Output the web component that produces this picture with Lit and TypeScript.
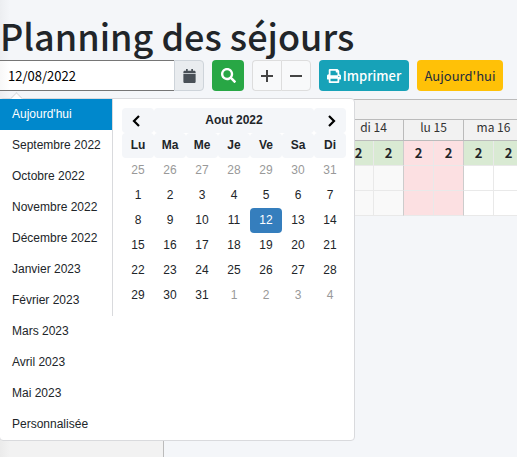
import { LitElement, html, css } from "lit";
import { customElement, state } from "lit/decorators.js";
import { classMap } from "lit/directives/class-map.js";

const RANGES = [
  "Aujourd'hui",
  "Septembre 2022",
  "Octobre 2022",
  "Novembre 2022",
  "Décembre 2022",
  "Janvier 2023",
  "Février 2023",
  "Mars 2023",
  "Avril 2023",
  "Mai 2023",
  "Personnalisée",
];

const WEEKDAYS = ["Lu", "Ma", "Me", "Je", "Ve", "Sa", "Di"];

@customElement("date-popover")
class DatePopover extends LitElement {
  @state() private range = 0;
  @state() private selected = 18;

  static styles = css`
    :host {
      display: flex;
      align-items: flex-start;
      box-sizing: border-box;
      width: 356px;
      background: #fff;
      border: 1px solid #d9dadd;
      border-radius: 4px;
      font: 12px/25px "Liberation Sans", Arial, sans-serif;
      color: #212529;
    }
    :host::before {
      content: "";
      position: absolute;
      top: -5px;
      left: 12px;
      width: 8px;
      height: 8px;
      background: #fff;
      border: solid #d9dadd;
      border-width: 1px 0 0 1px;
      transform: rotate(45deg);
    }
    button {
      font: inherit;
      color: inherit;
      border: 0;
      background: none;
      padding: 0;
      margin: 0;
      cursor: pointer;
    }
    .ranges {
      position: relative;
      list-style: none;
      margin: 0;
      padding: 0;
      width: 112px;
    }
    .range {
      display: block;
      width: 100%;
      height: 31px;
      padding: 0 12px;
      text-align: left;
      white-space: nowrap;
    }
    .range.active {
      background: #08c;
      color: #fff;
    }
    .calendar {
      flex: 1;
      border-left: 1px solid #d9dadd;
      padding: 9px 8px 8px 9px;
    }
    table {
      width: 100%;
      table-layout: fixed;
      border-collapse: separate;
      border-spacing: 0;
    }
    th,
    td {
      height: 25px;
      padding: 0;
      text-align: center;
    }
    th {
      background: #f4f6f9;
      border-radius: 4px;
    }
    th button,
    td button {
      display: block;
      width: 100%;
      height: 25px;
      border-radius: 4px;
    }
    .chevron {
      display: block;
      width: 12px;
      height: 12px;
      margin: 0 auto;
    }
    .off {
      color: #999;
    }
    .chosen {
      background: #357ebd;
      color: #fff;
    }
  `;

  private day(i: number) {
    const n = i < 7 ? 25 + i : i < 38 ? i - 6 : i - 37;
    const off = i < 7 || i > 37;
    return html`<td>
      <button
        class=${classMap({ off, chosen: i === this.selected })}
        @click=${() => (this.selected = i)}
      >${n}</button>
    </td>`;
  }

  render() {
    return html`
      <ul class="ranges">
        ${RANGES.map(
          (r, i) => html`<li>
            <button
              class=${classMap({ range: true, active: i === this.range })}
              @click=${() => (this.range = i)}
            >${r}</button>
          </li>`
        )}
      </ul>
      <div class="calendar">
        <table>
          <thead>
            <tr>
              <th>
                <button aria-label="Mois précédent">
                  <svg class="chevron" viewBox="0 0 12 12" fill="none" stroke="#000" stroke-width="2.200"><path d="M7 1 2 6l5 5" /></svg>
                </button>
              </th>
              <th colspan="5">Aout 2022</th>
              <th>
                <button aria-label="Mois suivant">
                  <svg class="chevron" viewBox="0 0 12 12" fill="none" stroke="#000" stroke-width="2.200"><path d="m5 1 5 5-5 5" /></svg>
                </button>
              </th>
            </tr>
            <tr>${WEEKDAYS.map((d) => html`<th>${d}</th>`)}</tr>
          </thead>
          <tbody>
            ${[0, 1, 2, 3, 4, 5].map(
              (w) => html`<tr>${WEEKDAYS.map((_, d) => this.day(w * 7 + d))}</tr>`
            )}
          </tbody>
        </table>
      </div>
    `;
  }
}

interface Day {
  label: string;
  kind: "work" | "weekend" | "holiday";
  free: string[];
}

const DAYS: Day[] = [
  { label: "", kind: "work", free: ["", ""] },
  { label: "", kind: "work", free: ["", ""] },
  { label: "", kind: "weekend", free: ["", ""] },
  { label: "di 14", kind: "weekend", free: ["2", "2"] },
  { label: "lu 15", kind: "holiday", free: ["2", "2"] },
  { label: "ma 16", kind: "work", free: ["2", "2"] },
];

@customElement("stay-planner")
class StayPlanner extends LitElement {
  static styles = css`
    :host {
      display: flex;
      overflow: hidden;
      font: 12px/20px "Noto Sans CJK SC", "Noto Sans", sans-serif;
      color: #333;
    }
    .rooms {
      flex: none;
      box-sizing: border-box;
      width: 164px;
      background: linear-gradient(90deg, #ebebeb, #f2f2f2 10px);
      border-top: 1px solid #bbb;
      border-right: 1px solid #bbb;
    }
    .days {
      flex: 1;
      min-width: 0;
      overflow: hidden;
    }
    table {
      width: 360px;
      table-layout: fixed;
      border-collapse: separate;
      border-spacing: 0;
    }
    th,
    td {
      box-sizing: border-box;
      padding: 0;
      text-align: center;
    }
    th {
      background: #f2f2f2;
      font-weight: 400;
      border: solid #bbb;
      border-width: 0 1px 1px 0;
    }
    .month {
      height: 21px;
      border-top-width: 1px;
    }
    .day {
      height: 21px;
      line-height: 14px;
      padding-bottom: 6px;
    }
    td {
      height: 25px;
      background: #fff;
      border: solid #e9e9e9;
      border-width: 0 1px 1px 0;
    }
    .pm {
      border-right-color: #ccc;
    }
    .weekend {
      background: #f9f9f9;
    }
    .count {
      background: #d9ead3;
      font-weight: 700;
      font-size: 13px;
      line-height: 24px;
      color: #212529;
    }
    .holiday {
      background: #fce0e2;
    }
  `;

  private cells(count: boolean) {
    return DAYS.map((d) =>
      ["am", "pm"].map(
        (half, i) => html`<td
          class=${classMap({
            [half]: true,
            weekend: d.kind === "weekend",
            count,
            holiday: d.kind === "holiday",
          })}
        >${count ? d.free[i] : ""}</td>`
      )
    );
  }

  render() {
    return html`
      <div class="rooms"></div>
      <div class="days">
        <table>
          <thead>
            <tr><th class="month" colspan="12"></th></tr>
            <tr>${DAYS.map((d) => html`<th class="day" colspan="2">${d.label}</th>`)}</tr>
          </thead>
          <tbody>
            <tr>${this.cells(true)}</tr>
            <tr>${this.cells(false)}</tr>
            <tr>${this.cells(false)}</tr>
          </tbody>
        </table>
      </div>
    `;
  }
}

@customElement("app-root")
class AppRoot extends LitElement {
  static styles = css`
    :host {
      display: flex;
      flex-direction: column;
      min-height: 100vh;
      overflow: hidden;
      background: linear-gradient(90deg, #eceef1, #f4f6f9 10px);
      font: 13px/20px "Noto Sans CJK SC", "Noto Sans", sans-serif;
      color: #212529;
    }
    h1 {
      margin: 0;
      padding: 12px 0 2px;
      font-size: 36px;
      line-height: 46px;
      font-weight: 500;
      white-space: nowrap;
    }
    .toolbar {
      position: relative;
      display: flex;
      gap: 8px;
      height: 31px;
      margin-bottom: 8px;
    }
    .group {
      display: flex;
    }
    input {
      box-sizing: border-box;
      width: 174px;
      margin: 0;
      padding: 0 8px;
      border: solid #767676;
      border-width: 1px 0;
      border-radius: 0;
      background: linear-gradient(90deg, #f8f8f8, #fff 10px);
      font: inherit;
      color: #000;
    }
    .btn {
      display: flex;
      align-items: center;
      justify-content: center;
      gap: 2px;
      box-sizing: border-box;
      padding: 0 8px;
      margin: 0;
      border: 1px solid transparent;
      border-radius: 4px;
      font: inherit;
      white-space: nowrap;
      cursor: pointer;
    }
    .addon {
      width: 30px;
      background: #e9ecef;
      border-color: #ced4da;
      border-radius: 0 4px 4px 0;
      color: #495057;
    }
    .search {
      width: 32px;
      background: #28a745;
      color: #fff;
    }
    .zoom {
      background: #f8f9fa;
      border-color: #ddd;
      color: #444;
    }
    .zoom.in {
      width: 29px;
      border-radius: 4px 0 0 4px;
      border-right-width: 0;
    }
    .zoom.out {
      width: 30px;
      border-radius: 0 4px 4px 0;
    }
    .print {
      width: 90px;
      background: #17a2b8;
      color: #fff;
      font-weight: 500;
    }
    .today {
      width: 86px;
      background: #ffc107;
      color: #1f2d3d;
    }
    svg {
      flex: none;
      display: block;
      fill: currentColor;
    }
    date-popover {
      position: absolute;
      top: 38px;
      left: -1px;
      z-index: 1;
    }
    stay-planner {
      flex: 1;
    }
  `;

  render() {
    return html`
      <h1>Planning des séjours</h1>
      <div class="toolbar">
        <div class="group">
          <input type="text" aria-label="Date" value="12/08/2022" />
          <button class="btn addon" aria-label="Calendrier">
            <svg width="13" height="14" viewBox="0 0 448 512"><path d="M0 464c0 26.500 21.500 48 48 48h352c26.500 0 48-21.500 48-48V176H0v288zM448 144v-32c0-26.500-21.500-48-48-48h-48V12c0-6.600-5.400-12-12-12h-40c-6.600 0-12 5.400-12 12v52H160V12c0-6.600-5.400-12-12-12h-40c-6.600 0-12 5.400-12 12v52H48C21.500 64 0 85.500 0 112v32h448z" /></svg>
          </button>
        </div>
        <button class="btn search" aria-label="Rechercher">
          <svg width="15" height="15" viewBox="0 0 512 512"><path d="M505 442.700 405.300 343c-4.500-4.500-10.600-7-17-7H372c27.600-35.300 44-79.700 44-128C416 93.100 322.900 0 208 0S0 93.100 0 208s93.100 208 208 208c48.300 0 92.700-16.400 128-44v16.300c0 6.400 2.500 12.500 7 17l99.700 99.700c9.400 9.400 24.600 9.400 33.900 0l28.300-28.300c9.400-9.400 9.400-24.600.1-34zM208 336c-70.700 0-128-57.200-128-128 0-70.700 57.200-128 128-128 70.700 0 128 57.200 128 128 0 70.700-57.200 128-128 128z" /></svg>
        </button>
        <div class="group">
          <button class="btn zoom in" aria-label="Agrandir">
            <svg width="12" height="12" viewBox="0 0 12 12"><path d="M5 0h2v5h5v2H7v5H5V7H0V5h5z" /></svg>
          </button>
          <button class="btn zoom out" aria-label="Réduire">
            <svg width="12" height="12" viewBox="0 0 12 12"><path d="M0 5h12v2H0z" /></svg>
          </button>
        </div>
        <button class="btn print">
          <svg width="14" height="14" viewBox="0 0 512 512"><path d="M448 192V77.300c0-8.500-3.400-16.600-9.400-22.600L393.400 9.400c-6-6-14.100-9.400-22.600-9.400H96C78.300 0 64 14.300 64 32v160c-35.300 0-64 28.700-64 64v112c0 8.800 7.200 16 16 16h48v96c0 17.700 14.300 32 32 32h320c17.700 0 32-14.300 32-32v-96h48c8.800 0 16-7.200 16-16V256c0-35.300-28.700-64-64-64zm-64 256H128v-96h256v96zm0-224H128V64h192v48c0 8.800 7.200 16 16 16h48v96zm48 72c-13.300 0-24-10.700-24-24s10.700-24 24-24 24 10.700 24 24-10.700 24-24 24z" /></svg>
          <span>Imprimer</span>
        </button>
        <button class="btn today">Aujourd'hui</button>
        <date-popover></date-popover>
      </div>
      <stay-planner></stay-planner>
    `;
  }
}
